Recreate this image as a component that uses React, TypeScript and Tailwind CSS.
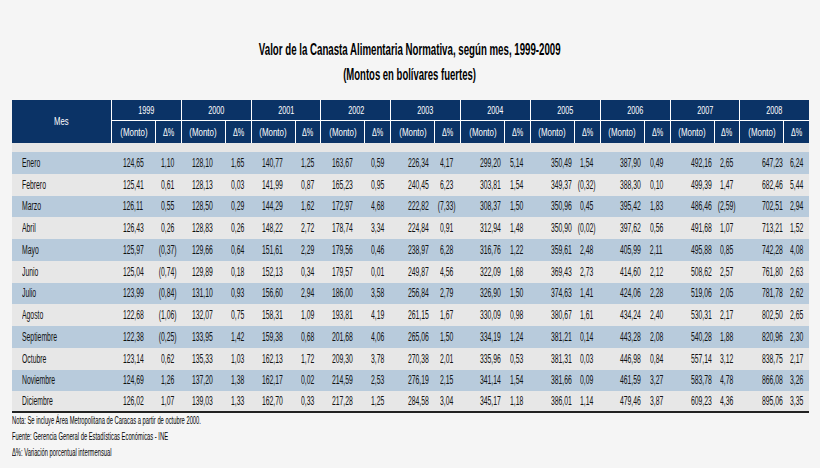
import type { ReactNode } from "react";

type Row = { month: string; values: [string, string][] };

const years = ["1999", "2000", "2001", "2002", "2003", "2004", "2005", "2006", "2007", "2008"];

// desplazamiento de los montos en cada año (el original no está centrado)
const montoShift = ["", "", "", "", "pl-[12px]", "pl-[16px]", "pl-[18px]", "pl-[18px]", "pl-[20px]", "pl-[22px]"];

const raw: [string, string][] = [
  ["Enero", "124,65 1,10 128,10 1,65 140,77 1,25 163,67 0,59 226,34 4,17 299,20 5,14 350,49 1,54 387,90 0,49 492,16 2,65 647,23 6,24"],
  ["Febrero", "125,41 0,61 128,13 0,03 141,99 0,87 165,23 0,95 240,45 6,23 303,81 1,54 349,37 (0,32) 388,30 0,10 499,39 1,47 682,46 5,44"],
  ["Marzo", "126,11 0,55 128,50 0,29 144,29 1,62 172,97 4,68 222,82 (7,33) 308,37 1,50 350,96 0,45 395,42 1,83 486,46 (2,59) 702,51 2,94"],
  ["Abril", "126,43 0,26 128,83 0,26 148,22 2,72 178,74 3,34 224,84 0,91 312,94 1,48 350,90 (0,02) 397,62 0,56 491,68 1,07 713,21 1,52"],
  ["Mayo", "125,97 (0,37) 129,66 0,64 151,61 2,29 179,56 0,46 238,97 6,28 316,76 1,22 359,61 2,48 405,99 2,11 495,88 0,85 742,28 4,08"],
  ["Junio", "125,04 (0,74) 129,89 0,18 152,13 0,34 179,57 0,01 249,87 4,56 322,09 1,68 369,43 2,73 414,60 2,12 508,62 2,57 761,80 2,63"],
  ["Julio", "123,99 (0,84) 131,10 0,93 156,60 2,94 186,00 3,58 256,84 2,79 326,90 1,50 374,63 1,41 424,06 2,28 519,06 2,05 781,78 2,62"],
  ["Agosto", "122,68 (1,06) 132,07 0,75 158,31 1,09 193,81 4,19 261,15 1,67 330,09 0,98 380,67 1,61 434,24 2,40 530,31 2,17 802,50 2,65"],
  ["Septiembre", "122,38 (0,25) 133,95 1,42 159,38 0,68 201,68 4,06 265,06 1,50 334,19 1,24 381,21 0,14 443,28 2,08 540,28 1,88 820,96 2,30"],
  ["Octubre", "123,14 0,62 135,33 1,03 162,13 1,72 209,30 3,78 270,38 2,01 335,96 0,53 381,31 0,03 446,98 0,84 557,14 3,12 838,75 2,17"],
  ["Noviembre", "124,69 1,26 137,20 1,38 162,17 0,02 214,59 2,53 276,19 2,15 341,14 1,54 381,66 0,09 461,59 3,27 583,78 4,78 866,08 3,26"],
  ["Diciembre", "126,02 1,07 139,03 1,33 162,70 0,33 217,28 1,25 284,58 3,04 345,17 1,18 386,01 1,14 479,46 3,87 609,23 4,36 895,06 3,35"],
];

const rows: Row[] = raw.map(([month, line]) => {
  const parts = line.split(" ");
  const values: [string, string][] = [];
  for (let i = 0; i < parts.length; i += 2) values.push([parts[i], parts[i + 1]]);
  return { month, values };
});

function Narrow({ children, left, className }: { children: ReactNode; left?: boolean; className?: string }) {
  return (
    <span
      className={`inline-block whitespace-nowrap ${left ? "origin-left" : "origin-center"} ${className ?? "scale-x-[0.57]"}`}
    >
      {children}
    </span>
  );
}

export default function App() {
  return (
    <div
      className="h-[468px] w-[820px] overflow-hidden bg-[#f5f5f5] pt-[39px] text-[#111]"
      style={{ fontFamily: '"Liberation Sans", Arial, sans-serif' }}
    >
      <div className="flex flex-col items-center font-bold text-black">
        <div className="flex h-[22px] items-center text-[17px]">
          <Narrow className="scale-x-[0.57]">Valor de la Canasta Alimentaria Normativa, según mes, 1999-2009</Narrow>
        </div>
        <div className="mt-[2px] flex h-[24px] items-center text-[17px]">
          <Narrow className="scale-x-[0.56]">(Montos en bolívares fuertes)</Narrow>
        </div>
      </div>

      <table className="ml-[12px] mt-[13px] w-[797px] table-fixed border-separate border-spacing-0">
        <colgroup>
          <col className="w-[99px]" />
          {years.map((y) => [<col key={`${y}m`} className="w-[44px]" />, <col key={`${y}d`} className="w-[25.8px]" />])}
        </colgroup>
        <thead className="bg-[#0b3366] text-[11px] text-white">
          <tr className="h-[21px]">
            <th rowSpan={2} className="p-0 font-normal">
              <div className="flex justify-center">
                <Narrow className="scale-x-[0.7]">Mes</Narrow>
              </div>
            </th>
            {years.map((y) => (
              <th key={y} colSpan={2} className="border-b border-l border-white p-0 font-normal">
                <div className="flex justify-center">
                  <Narrow className="scale-x-[0.66]">{y}</Narrow>
                </div>
              </th>
            ))}
          </tr>
          <tr className="h-[22px]">
            {years.map((y) => [
              <th key={`${y}m`} className="border-l border-white p-0 font-normal">
                <div className="flex justify-center">
                  <Narrow className="scale-x-[0.72]">(Monto)</Narrow>
                </div>
              </th>,
              <th key={`${y}d`} className="border-l border-white p-0 font-normal">
                <div className="flex justify-center">
                  <Narrow className="scale-x-[0.66]">Δ%</Narrow>
                </div>
              </th>,
            ])}
          </tr>
        </thead>
        <tbody className="text-[12px]">
          <tr className="h-[9px] bg-[#e6e6e6]">
            <td colSpan={21} className="p-0" />
          </tr>
          {rows.map((row, i) => {
            const last = i === rows.length - 1;
            const cell = `p-0 ${last ? "border-b-2 border-[#222]" : ""}`;
            return (
              <tr key={row.month} className={`h-[21.75px] ${i % 2 === 0 ? "bg-[#b8cbdc]" : "bg-[#e7e7e7]"}`}>
                <td className={`${cell} pl-[10px]`}>
                  <Narrow left>{row.month}</Narrow>
                </td>
                {row.values.map(([monto, delta], j) => [
                  <td key={`${j}m`} className={cell}>
                    <div className={`flex justify-center ${montoShift[j]}`}>
                      <Narrow>{monto}</Narrow>
                    </div>
                  </td>,
                  <td key={`${j}d`} className={cell}>
                    <div className="flex justify-center">
                      <Narrow>{delta}</Narrow>
                    </div>
                  </td>,
                ])}
              </tr>
            );
          })}
        </tbody>
      </table>

      <div className="ml-[12px] text-[10px] leading-[16px] text-black">
        <div>
          <Narrow left className="scale-x-[0.58]">Nota: Se incluye Área Metropolitana de Caracas a partir de octubre 2000.</Narrow>
        </div>
        <div>
          <Narrow left className="scale-x-[0.58]">Fuente: Gerencia General de Estadísticas Económicas - INE</Narrow>
        </div>
        <div>
          <Narrow left className="scale-x-[0.58]">Δ%: Variación porcentual intermensual</Narrow>
        </div>
      </div>
    </div>
  );
}
